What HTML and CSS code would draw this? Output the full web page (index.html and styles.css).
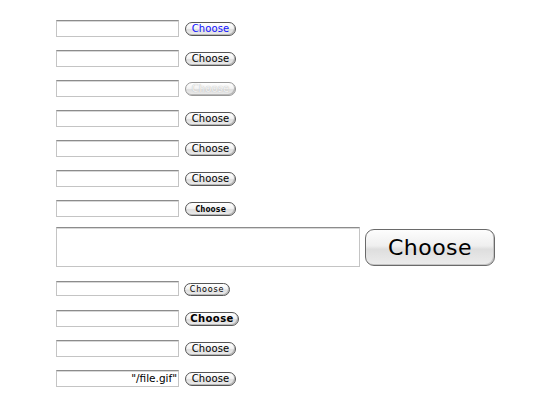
FILE: index.html
```
<!DOCTYPE html>
<html>
<head>
    <title>File inputs</title>
    <link rel="stylesheet" href="styles.css">
</head>
<body>
    <div class="file-list">
        <div class="file-row">
            <span class="file-field"></span>
            <button class="choose choose-blue">Choose</button>
        </div>
        <div class="file-row">
            <span class="file-field"></span>
            <button class="choose">Choose</button>
        </div>
        <div class="file-row">
            <span class="file-field"></span>
            <button class="choose choose-disabled">Choose</button>
        </div>
        <div class="file-row">
            <span class="file-field"></span>
            <button class="choose">Choose</button>
        </div>
        <div class="file-row">
            <span class="file-field"></span>
            <button class="choose">Choose</button>
        </div>
        <div class="file-row">
            <span class="file-field"></span>
            <button class="choose">Choose</button>
        </div>
        <div class="file-row">
            <span class="file-field"></span>
            <button class="choose choose-mono">Choose</button>
        </div>
        <div class="file-row big-row">
            <span class="file-field big-field"></span>
            <button class="choose big-choose">Choose</button>
        </div>
        <div class="file-row small-row">
            <span class="file-field small-field"></span>
            <button class="choose choose-small">Choose</button>
        </div>
        <div class="file-row">
            <span class="file-field"></span>
            <button class="choose choose-bold">Choose</button>
        </div>
        <div class="file-row">
            <span class="file-field"></span>
            <button class="choose">Choose</button>
        </div>
        <div class="file-row">
            <span class="file-field with-value">"/file.gif"</span>
            <button class="choose">Choose</button>
        </div>
    </div>
</body>
</html>
```

FILE: styles.css
```
body {
    margin: 0;
    background: #fff;
    font-family: "DejaVu Sans", "Liberation Sans", sans-serif;
}

.file-list {
    display: flex;
    flex-direction: column;
    padding: 20px 0 0 56px;
}

.file-row {
    display: flex;
    align-items: center;
    gap: 6px;
    height: 17px;
    margin-bottom: 13px;
}

.file-field {
    box-sizing: border-box;
    display: block;
    width: 123px;
    height: 17px;
    border: 1px solid #c4c4c4;
    border-top-color: #8c8c8c;
    box-shadow: inset 0 1px #d8d8d8;
    background: #fff;
    font-size: 11px;
    line-height: 15px;
    text-align: right;
    padding-right: 3px;
    color: #000;
}

.choose {
    box-sizing: border-box;
    width: 51px;
    height: 14px;
    margin: 1px 0 0 0;
    padding: 0;
    border: 1px solid #555;
    border-radius: 7px;
    box-shadow: inset -1px -1px 0 #b8b8b8;
    background: linear-gradient(#ffffff, #f3f3f3 45%, #dedede 55%, #ececec);
    font-family: "DejaVu Sans", sans-serif;
    font-size: 10px;
    line-height: 12px;
    color: #000;
    letter-spacing: 0.1px;
}

.choose-blue {
    color: #1010ff;
}

.choose-disabled {
    color: #f4f4f4;
    border-color: #999;
    text-shadow: 0 0 1px #aaa;
}

.choose-mono {
    font-family: "DejaVu Sans Mono", monospace;
    font-size: 8.5px;
    font-weight: bold;
    letter-spacing: 0;
}

/* the large row */
.big-row {
    height: 40px;
    margin-top: -3px;
    margin-bottom: 14px;
    gap: 5px;
}

.big-field {
    width: 304px;
    height: 40px;
}

.big-choose {
    width: 130px;
    height: 37px;
    border-radius: 9px;
    border-color: #6a6a6a;
    box-shadow: inset -1px -1px 0 #c4c4c4;
    font-size: 22px;
    line-height: 34px;
    letter-spacing: 0.5px;
    background: linear-gradient(#fdfdfd, #efefef 45%, #dedede 55%, #ececec);
}

.small-row {
    height: 15px;
    margin-bottom: 14px;
    gap: 5px;
}

.small-field {
    height: 15px;
}

.choose-small {
    width: 46px;
    height: 13px;
    font-size: 8px;
    line-height: 11px;
    letter-spacing: 0.8px;
}

.choose-bold {
    width: 54px;
    font-weight: bold;
    font-size: 10px;
    letter-spacing: 0.4px;
}

.with-value {
    font-size: 10.5px;
    padding-right: 1px;
}
```
